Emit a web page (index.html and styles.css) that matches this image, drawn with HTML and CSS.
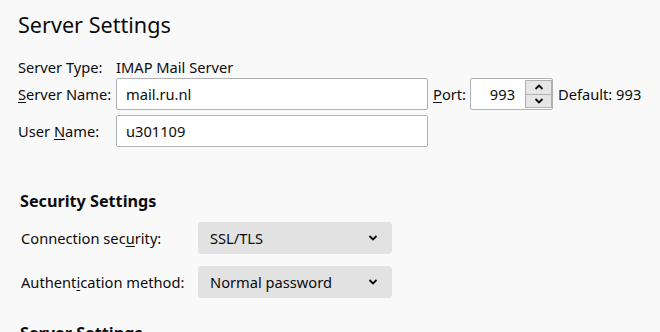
FILE: index.html
```html
<!DOCTYPE html>
<html lang="en">
<head>
    <meta charset="UTF-8">
    <title>Server Settings</title>
    <link rel="stylesheet" href="styles.css">
</head>
<body>
    <div class="page">
        <h1 class="page-title">Server Settings</h1>

        <!-- Server identity -->
        <div class="server-grid">
            <span class="field-label">Server Type:</span>
            <span class="field-value">IMAP Mail Server</span>

            <label class="field-label" for="server-name"><u>S</u>erver Name:</label>
            <div class="server-row">
                <input id="server-name" class="text-input wide" type="text" value="mail.ru.nl">
                <label class="port-label" for="port"><u>P</u>ort:</label>
                <div class="spin-box">
                    <input id="port" class="spin-input" type="text" value="993">
                    <div class="spin-buttons">
                        <span class="spin-btn">
                            <svg width="10" height="6" viewBox="0 0 10 6"><path d="M1.5 5 L5 1.5 L8.5 5" fill="none" stroke="#0c0c0d" stroke-width="1.8"/></svg>
                        </span>
                        <span class="spin-btn">
                            <svg width="10" height="6" viewBox="0 0 10 6"><path d="M1.5 1 L5 4.5 L8.5 1" fill="none" stroke="#0c0c0d" stroke-width="1.8"/></svg>
                        </span>
                    </div>
                </div>
                <span class="default-note">Default: 993</span>
            </div>

            <label class="field-label" for="user-name">User <u>N</u>ame:</label>
            <div>
                <input id="user-name" class="text-input wide" type="text" value="u301109">
            </div>
        </div>

        <!-- Security -->
        <h2 class="section-title">Security Settings</h2>
        <div class="security-grid">
            <label class="field-label">Connection sec<u>u</u>rity:</label>
            <div class="select-box">
                <span>SSL/TLS</span>
                <svg width="10" height="6" viewBox="0 0 10 6"><path d="M1.5 1 L5 4.5 L8.5 1" fill="none" stroke="#0c0c0d" stroke-width="1.8"/></svg>
            </div>

            <label class="field-label">Authent<u>i</u>cation method:</label>
            <div class="select-box">
                <span>Normal password</span>
                <svg width="10" height="6" viewBox="0 0 10 6"><path d="M1.5 1 L5 4.5 L8.5 1" fill="none" stroke="#0c0c0d" stroke-width="1.8"/></svg>
            </div>
        </div>

        <h2 class="section-title next">Server Settings</h2>
    </div>
</body>
</html>
```

FILE: styles.css
```css
/* Base */
body {
    margin: 0;
    background: #f9f9fa;
    color: #0c0c0d;
    font-family: "Noto Sans", sans-serif;
    font-size: 14.667px;
}

.page {
    padding: 10px 0 0 18px;
}

.page-title {
    margin: 0;
    font-size: 21.6px;
    font-weight: normal;
    line-height: 30px;
}

/* Server identity grid */
.server-grid {
    display: grid;
    grid-template-columns: 98px auto;
    align-items: center;
    row-gap: 5px;
    margin-top: 17px;
}

.server-grid .field-label:first-child,
.server-grid .field-value {
    margin-bottom: -4px;
}

.field-label u,
.port-label u {
    text-decoration-thickness: 1px;
    text-underline-offset: 2px;
}

.server-row {
    display: flex;
    align-items: center;
}

.text-input {
    box-sizing: border-box;
    height: 32px;
    border: 1px solid #b1b1b3;
    border-radius: 2px;
    background: #fff;
    padding: 0 9px;
    font: inherit;
    color: inherit;
}

.text-input.wide {
    width: 312px;
}

.port-label {
    margin: 0 4px 0 5px;
}

/* Number spinner */
.spin-box {
    box-sizing: border-box;
    display: flex;
    align-items: center;
    width: 83px;
    height: 32px;
    border: 1px solid #b1b1b3;
    border-radius: 2px;
    background: #fff;
}

.spin-input {
    width: 44px;
    border: none;
    background: transparent;
    font: inherit;
    color: inherit;
    text-align: right;
    padding: 0;
    outline: none;
}

.spin-buttons {
    display: flex;
    flex-direction: column;
    margin-left: 10px;
    width: 27px;
    height: 28px;
    border: 1px solid #b1b1b3;
    box-sizing: border-box;
}

.spin-btn {
    flex: 1;
    display: flex;
    justify-content: center;
    align-items: center;
    background: #e6e6e6;
}

.spin-btn + .spin-btn {
    border-top: 1px solid #b1b1b3;
}

.default-note {
    margin-left: 5px;
}

/* Sections */
.section-title {
    margin: 43px 0 0 2px;
    font-size: 16.2px;
    font-weight: bold;
    line-height: 22px;
}

.section-title.next {
    margin-top: 24px;
}

.security-grid {
    display: grid;
    grid-template-columns: 177px 194px;
    align-items: center;
    row-gap: 12px;
    margin: 10px 0 0 3px;
}

.select-box {
    box-sizing: border-box;
    height: 32px;
    display: flex;
    align-items: center;
    justify-content: space-between;
    padding: 0 14px 0 12px;
    background: #e2e2e3;
    border-radius: 4px;
}
```
